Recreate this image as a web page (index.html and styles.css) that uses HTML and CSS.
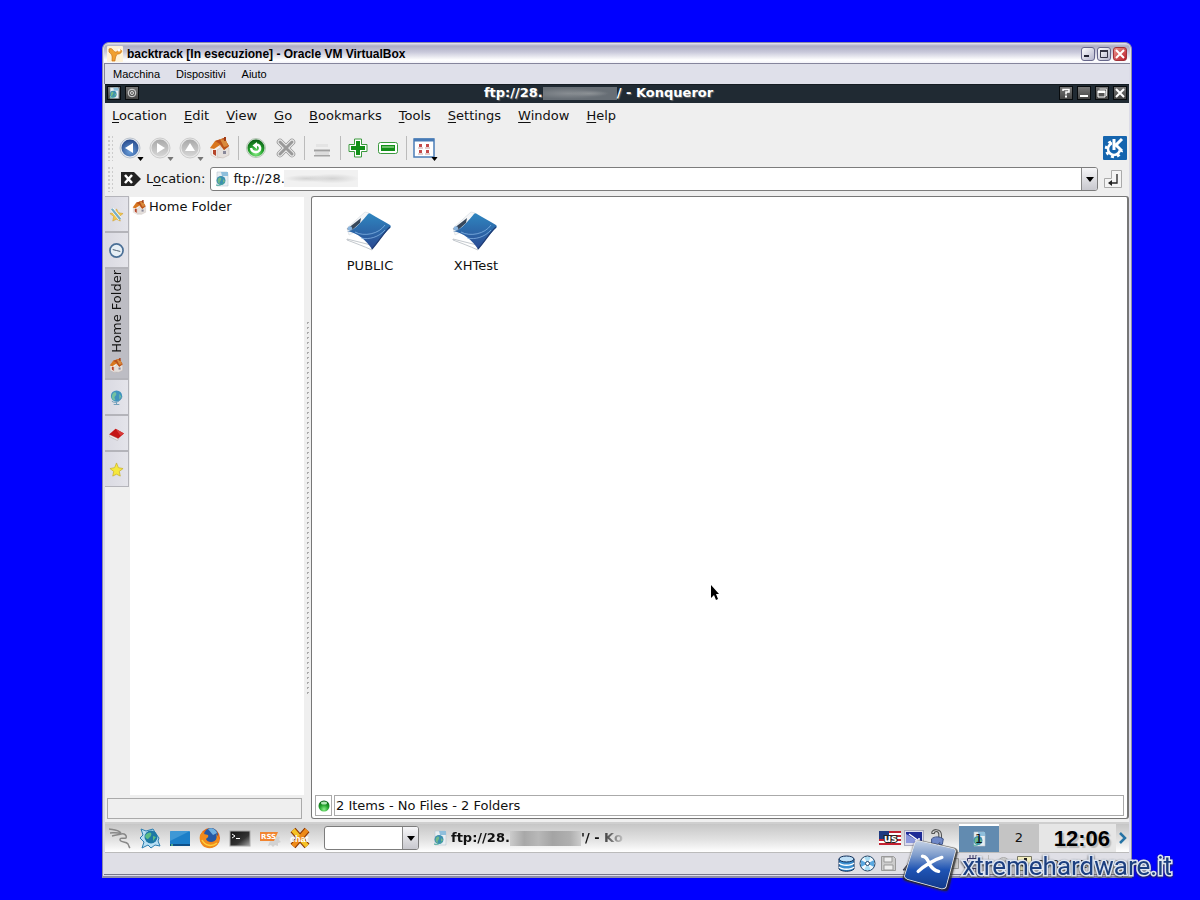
FILE: index.html
```html
<!DOCTYPE html>
<html lang="it">
<head>
<meta charset="utf-8">
<title>backtrack [In esecuzione] - Oracle VM VirtualBox</title>
<link rel="stylesheet" href="styles.css">
</head>
<body>
<svg class="defs" aria-hidden="true">
  <defs>
    <linearGradient id="gBlue" x1="0" y1="0" x2="0" y2="1"><stop offset="0" stop-color="#2f86c0"/><stop offset="1" stop-color="#2a4a92"/></linearGradient>
    <radialGradient id="gBack" cx=".5" cy=".7" r=".7"><stop offset="0" stop-color="#6ba0dc"/><stop offset="1" stop-color="#274a8c"/></radialGradient>
    <linearGradient id="gGray" x1="0" y1="0" x2="0" y2="1"><stop offset="0" stop-color="#a9a9a9"/><stop offset="1" stop-color="#d6d6d6"/></linearGradient>
    <radialGradient id="gGreen" cx=".5" cy=".8" r=".8"><stop offset="0" stop-color="#8df08a"/><stop offset=".5" stop-color="#23a32b"/><stop offset="1" stop-color="#0a5a14"/></radialGradient>
    <linearGradient id="gLogo" x1="0" y1="0" x2="0" y2="1"><stop offset="0" stop-color="#c3d0e4"/><stop offset=".3" stop-color="#7d9bcb"/><stop offset=".6" stop-color="#1f54b4"/><stop offset="1" stop-color="#123a8c"/></linearGradient>
    <linearGradient id="gDark" x1="0" y1="0" x2="1" y2="1"><stop offset="0" stop-color="#111"/><stop offset=".6" stop-color="#333"/><stop offset="1" stop-color="#aaa"/></linearGradient>
  </defs>
  <symbol id="house" viewBox="0 0 22 22">
    <path d="M2 11l5-4 7 4v9l-6 1-6-3z" fill="#f6f2ee" stroke="#c9bdb5" stroke-width=".6"/>
    <path d="M8 13l6-4 6 2v7l-6 3-6-1z" fill="#e4dfdc" stroke="#c0b6b0" stroke-width=".5"/>
    <path d="M1 11l5-7 9-3 5 8-5 4-4-5-6 4z" fill="#d9771f"/>
    <path d="M6 4l9-3 5 8-5 4-4-6z" fill="#b9501a"/>
    <path d="M11 2l6 1 2 6-4 1z" fill="#d88a3d"/>
    <path d="M4 13h3v6l-3-2z" fill="#b5452a"/><path d="M14 14h3v3h-3z" fill="#889"/>
    <path d="M15 0h2v4h-2z" fill="#a03a16"/>
  </symbol>
  <symbol id="page" viewBox="0 0 14 16">
    <path d="M2 1h10l1 2v12H2z" fill="#e8eef2" stroke="#b8c8d2" stroke-width=".6"/>
    <path d="M6 1h7v4H7z" fill="#8fbfdc"/>
    <circle cx="6" cy="9.500" r="4.500" fill="#3b8fb0"/>
    <path d="M3 8c2-3 4-1 3 1s-2 2-1 4c-2 0-3-3-2-5zM8 8l2 2-2 3z" fill="#72b98a"/>
    <path d="M1 14c3 1 6 0 8-3" fill="none" stroke="#4a9" stroke-width="1"/>
  </symbol>
  <symbol id="folder" viewBox="0 0 48 42">
    <path d="M3 18L21 2l4 1-8 16-12 6z" fill="#f4f6f8" stroke="#d5dadf" stroke-width=".6"/>
    <path d="M3 29l24 6 1 5C19 36 11 33 3 30z" fill="#fff" stroke="#b4bac0" stroke-width=".8"/>
    <path d="M3 19l14-11-1 5-9 8z" fill="#38485b"/><circle cx="6" cy="18.500" r="2.200" fill="#8ab4de"/>
    <path d="M3 21c2 0 4 0 5-1 6-4 11-10 16-16 1-1 2-1 3 0 6 4 13 7 19 11 1 1 1 2 0 3-6 5-10 12-18 21-6-9-14-16-25-18z" fill="url(#gBlue)"/>
    <path d="M11 22c9 5 24 2 30-7M17 28c8 2 18-1 24-8" fill="none" stroke="#8dbcea" stroke-width="1" opacity=".7"/>
    <path d="M28 39c9-10 12-17 18-22" fill="none" stroke="#1f3c74" stroke-width="1.200"/>
  </symbol>
  <symbol id="down" viewBox="0 0 8 5"><path d="M0 0h8L4 5z" fill="currentColor"/></symbol>
</svg>

<main class="vm">
  <header class="vm-title">
    <svg class="vm-logo" viewBox="0 0 16 16"><rect width="16" height="16" rx="1" fill="#fff3d8"/><path d="M2 3c3-2 4 2 6 3s4-4 6-2-1 4-3 4-3 5-3 7H5c0-4 1-6-3-9z" fill="#f0a030" stroke="#c86f14" stroke-width=".7"/><circle cx="12" cy="4" r="1.500" fill="#fff"/></svg>
    <h1>backtrack [In esecuzione] - Oracle VM VirtualBox</h1>
    <button class="xp" aria-label="Riduci"><svg viewBox="0 0 12 12"><path d="M2 7h5v2H2z" fill="#223"/></svg></button>
    <button class="xp" aria-label="Ingrandisci"><svg viewBox="0 0 12 12"><path d="M2.500 3h7v6.500h-7z" fill="none" stroke="#334"/><path d="M2 2h8v2H2z" fill="#334"/></svg></button>
    <button class="xp xp-close" aria-label="Chiudi"><svg viewBox="0 0 12 12"><path d="M2 2l8 8M10 2l-8 8" stroke="#fff" stroke-width="2"/></svg></button>
  </header>
  <nav class="vm-menu"><button>Macchina</button><button>Dispositivi</button><button>Aiuto</button></nav>

  <header class="kq-title">
    <div class="kq-side">
      <button class="kb" aria-label="Window menu"><svg viewBox="0 0 14 16"><use href="#page"/></svg></button>
      <button class="kb" aria-label="Sticky"><svg viewBox="0 0 12 12"><circle cx="6" cy="6" r="3.800" fill="none" stroke="#ddd"/><circle cx="6" cy="6" r="1.500" fill="none" stroke="#ddd"/></svg></button>
    </div>
    <h2><span>ftp://28.</span><i class="smudge smudge-dark"></i><span>/ - Konqueror</span></h2>
    <div class="kq-side kq-right">
      <button class="kb" aria-label="Help"><svg viewBox="0 0 12 12"><path d="M3 4V2.500h6V5H6v2.500" fill="none" stroke="#fff" stroke-width="1.500"/><path d="M5 8.500h2v2H5z" fill="#fff"/></svg></button>
      <button class="kb" aria-label="Minimize"><svg viewBox="0 0 12 12"><path d="M2 8h8v2H2z" fill="#fff"/></svg></button>
      <button class="kb" aria-label="Restore"><svg viewBox="0 0 12 12"><path d="M3.500 2h7v7" fill="none" stroke="#ddd"/><path d="M2 4h7v6H2z" fill="#555" stroke="#fff"/><path d="M2 4h7v2H2z" fill="#fff"/></svg></button>
      <button class="kb" aria-label="Close"><svg viewBox="0 0 12 12"><path d="M2 2l8 8M10 2l-8 8" stroke="#fff" stroke-width="2"/></svg></button>
    </div>
  </header>

  <nav class="kq-menu">
    <button><u>L</u>ocation</button><button><u>E</u>dit</button><button><u>V</u>iew</button><button><u>G</u>o</button><button><u>B</u>ookmarks</button><button><u>T</u>ools</button><button><u>S</u>ettings</button><button><u>W</u>indow</button><button><u>H</u>elp</button>
  </nav>

  <div class="toolbar">
    <i class="grip"></i>
    <button aria-label="Back"><svg viewBox="0 0 22 22"><circle cx="11" cy="11" r="10" fill="#e6eaf0" stroke="#bcc3cc"/><circle cx="11" cy="11" r="8.500" fill="url(#gBack)"/><path d="M6 11l8-5v10z" fill="#fff"/></svg><svg class="drop" viewBox="0 0 8 5"><use href="#down"/></svg></button>
    <button aria-label="Forward" class="off"><svg viewBox="0 0 22 22"><circle cx="11" cy="11" r="10" fill="#e8e8e8" stroke="#ccc"/><circle cx="11" cy="11" r="8.500" fill="url(#gGray)"/><path d="M16 11L8 6v10z" fill="#fff"/></svg><svg class="drop" viewBox="0 0 8 5"><use href="#down"/></svg></button>
    <button aria-label="Up" class="off"><svg viewBox="0 0 22 22"><circle cx="11" cy="11" r="10" fill="#e8e8e8" stroke="#ccc"/><circle cx="11" cy="11" r="8.500" fill="url(#gGray)"/><path d="M11 6l5 8H6z" fill="#fff"/></svg><svg class="drop" viewBox="0 0 8 5"><use href="#down"/></svg></button>
    <button aria-label="Home"><svg viewBox="0 0 22 22"><use href="#house"/></svg></button>
    <i class="sep"></i>
    <button aria-label="Reload"><svg viewBox="0 0 22 22"><circle cx="11" cy="11" r="9.500" fill="#d9e8d9" stroke="#b5c5b5"/><circle cx="11" cy="11" r="8.500" fill="url(#gGreen)"/><path d="M6 11c1 6 10 5 9-.500C14.500 8 12 7 10 8.500" fill="none" stroke="#fff" stroke-width="2.500"/><path d="M12 5v7L7.500 8.500z" fill="#fff"/></svg></button>
    <button aria-label="Stop"><svg viewBox="0 0 22 22"><path d="M5 5l12 12M17 5L5 17" stroke="#999" stroke-width="6.500" stroke-linecap="round"/><path d="M5 5l12 12M17 5L5 17" stroke="#eee" stroke-width="5" stroke-linecap="round"/><path d="M5 5l12 12M17 5L5 17" stroke="#999" stroke-width="3" stroke-linecap="round"/></svg></button>
    <i class="sep"></i>
    <button aria-label="Print"><svg viewBox="0 0 22 22"><path d="M5 7h12v3H5z" fill="#e4e4e4"/><path d="M3 12.500h16v2H3z" fill="#a0a0a0"/><path d="M4 15h14v3H4z" fill="#ddd"/><path d="M3 18h16v1.500H3z" fill="#a5a5a5"/></svg></button>
    <i class="sep"></i>
    <button aria-label="Increase"><svg viewBox="0 0 22 22"><path d="M7.500 2h7v5.500H20v7h-5.500V20h-7v-5.500H2v-7h5.500z" fill="#fff" stroke="#3a9a3d" stroke-linejoin="round"/><path d="M9 4h4v5h5v4h-5v5H9v-5H4V9h5z" fill="#129018"/></svg></button>
    <button aria-label="Decrease"><svg viewBox="0 0 22 22"><rect x="1.500" y="5.500" width="19" height="11" rx="2" fill="#fff" stroke="#3a9a3d"/><path d="M4 8h14v6H4z" fill="#129018"/><path d="M5 9h12v2H5z" fill="#6fc06c"/></svg></button>
    <i class="sep"></i>
    <button aria-label="Icon view"><svg viewBox="0 0 22 22"><path d="M1 2h20v18H1z" fill="#fff" stroke="#4b7db8" stroke-width="1.500"/><path d="M1 1.500h20v3H1z" fill="#477ab5"/><path d="M6 7h3v3H6zM13 7h3v3h-3zM6 13h3v3H6zM13 13h3v3h-3z" fill="#c44a4a"/><path d="M5 11h5M12 11h5M5 17h5M12 17h5" stroke="#c8a0a0"/></svg><svg class="drop" viewBox="0 0 8 5"><use href="#down"/></svg></button>
    <svg class="kde" viewBox="0 0 24 24"><rect width="24" height="24" rx="1" fill="#1565ae"/><circle cx="11" cy="13" r="6" fill="none" stroke="#fff" stroke-width="2.500"/><circle cx="11" cy="13" r="8" fill="none" stroke="#fff" stroke-width="2.500" stroke-dasharray="3 3.280"/><path d="M9 1h14v14h-5l-4-2H9z" fill="#1565ae"/><path d="M11 3v11M19 3l-6 6 6 6" fill="none" stroke="#fff" stroke-width="3"/></svg>
  </div>

  <div class="location">
    <i class="grip"></i>
    <button class="clear" aria-label="Clear location"><svg viewBox="0 0 20 16"><path d="M0 1h13l7 7-7 7H0z" fill="#222"/><path d="M4 4l7 8M11 4l-7 8" stroke="#fff" stroke-width="2.500"/></svg></button>
    <label for="url">L<u>o</u>cation:</label>
    <div class="combo url">
      <svg class="pageicon" viewBox="0 0 14 16"><use href="#page"/></svg>
      <input id="url" type="text" value="ftp://28.">
      <i class="smudge smudge-light"></i>
      <button aria-label="History"><svg viewBox="0 0 8 5"><use href="#down"/></svg></button>
    </div>
    <button class="go" aria-label="Go"><svg viewBox="0 0 20 20"><path d="M8.500 1.500h10v17h-17v-9h7z" fill="#f4f4f4" stroke="#aaa"/><path d="M14 5v9H6" fill="none" stroke="#222" stroke-width="1.300"/><path d="M5 14l4-3v6z" fill="#222"/></svg></button>
  </div>

  <div class="content">
    <aside class="side">
      <div class="side-main">
        <nav class="tabs">
          <button aria-label="Settings"><svg viewBox="0 0 16 16"><path d="M8 2l2 4 5 1-4 3 1 5-4-2-4 2 1-5-4-3 5-1z" fill="#f2c84b" stroke="#d0a030" stroke-width=".6"/><path d="M3 2l9 11" stroke="#fff" stroke-width="4"/><path d="M3 2l9 11" stroke="#77adc5" stroke-width="2.500"/></svg></button>
          <button aria-label="History"><svg viewBox="0 0 16 16"><circle cx="8" cy="8" r="7" fill="#e7eff5" stroke="#4a6f96" stroke-width="1.800"/><path d="M4 7l4 1 4 1" fill="none" stroke="#456"/></svg></button>
          <button class="on"><span>Home Folder</span><svg viewBox="0 0 22 22"><use href="#house"/></svg></button>
          <button aria-label="Network"><svg viewBox="0 0 16 16"><circle cx="8" cy="6.500" r="6" fill="#3f93bd"/><path d="M4 4c3-4 5 0 3 2s-1 2 0 5C3 11 2 7 4 4zM11 4l2 3-2 3z" fill="#73c2a0"/><path d="M3 12c4 3 9 0 11-5M8 13v2M5 15.500h6" fill="none" stroke="#6a9ab5"/></svg></button>
          <button aria-label="Root folder"><svg viewBox="0 0 16 16"><path d="M0 9l7-6 9 5-7 6z" fill="#c41414"/><path d="M0 9l9 4 1 1-1 1.500L0 11z" fill="#f4e8e8" stroke="#999" stroke-width=".4"/><path d="M7 3l9 5-4 2z" fill="#d83a3a"/></svg></button>
          <button aria-label="Bookmarks"><svg viewBox="0 0 16 16"><path d="M8 1l2 5 5 1-4 3 1 5-4-2-4 2 1-5-4-3 5-1z" fill="#f5e83c" stroke="#c9b12c" stroke-width=".8"/></svg></button>
        </nav>
        <div class="tree"><a href="#home"><svg viewBox="0 0 22 22"><use href="#house"/></svg>Home Folder</a></div>
      </div>
      <div class="side-foot"></div>
    </aside>
    <div class="splitter"></div>
    <section class="view">
      <div class="files">
        <a href="#public"><svg viewBox="0 0 48 42"><use href="#folder"/></svg>PUBLIC</a>
        <a href="#xhtest"><svg viewBox="0 0 48 42"><use href="#folder"/></svg>XHTest</a>
      </div>
      <footer class="status">
        <div class="led"><svg viewBox="0 0 12 12"><circle cx="6" cy="6" r="5.500" fill="url(#gGreen)"/><ellipse cx="6" cy="3" rx="3" ry="1.500" fill="#d9ffd9" opacity=".8"/></svg></div>
        <div class="msg">2 Items - No Files - 2 Folders</div>
      </footer>
    </section>
  </div>

  <footer class="panel">
    <div class="launch">
      <button aria-label="K Menu"><svg viewBox="0 0 22 22"><path d="M0 2c4 1 8 0 12 4M1 6c4 0 7-1 11 1M3 9c4-1 6-1 9-2 4-1 6 2 5 4-3 1-6-1-6 2 1 3 6 1 8 4 1 2 1 3 2 4" fill="none" stroke="#888" stroke-width="1.500"/></svg></button>
      <button aria-label="Konqueror"><svg viewBox="0 0 22 22"><path d="M2 2l5 2 7-2 3 5 3 4-1 3 2 5-5-1-4 3-3-3-6 3 2-6-4-4 3-3z" fill="#b8dff4" stroke="#2c7eb0"/><circle cx="12" cy="10" r="6.500" fill="#1d78a5"/><path d="M9 6c4-2 4 2 2 4s-2 3-4 1 0-4 2-5zM14 9l3 1-3 4z" fill="#5bbd85"/></svg></button>
      <button aria-label="Desktop"><svg viewBox="0 0 22 22"><rect x="1" y="4" width="20" height="15" rx="1" fill="#1c7fc8"/><path d="M1 4h20L1 14z" fill="#56a9de" opacity=".6"/><path d="M1 17h20v2H1z" fill="#0d4f88"/><path d="M2 18h2" stroke="#8f8" stroke-width="1"/></svg></button>
      <button aria-label="Firefox"><svg viewBox="0 0 22 22"><circle cx="11" cy="11" r="10" fill="#e66a13"/><circle cx="12" cy="8" r="7" fill="#2459a5"/><path d="M9 2c4-2 8 1 9 4l-4 2z" fill="#6fb0e0"/><path d="M1 8l3-4 1 3 4 1c1 2-1 3-2 4 1 4 6 4 9 2 2-2 2-5 1-7 4 3 4 8 1 11-4 4-10 4-14 1-3-3-4-7-3-11z" fill="#f08a1c"/><path d="M3 13c3 6 10 7 15 3" fill="none" stroke="#ffd03c" stroke-width="1.500"/></svg></button>
      <button aria-label="Terminal"><svg viewBox="0 0 22 22"><rect x="1" y="4" width="20" height="15" fill="url(#gDark)" stroke="#aaa"/><path d="M3 7l3 2-3 2M7 11.500h4" fill="none" stroke="#fff"/></svg></button>
      <button aria-label="RSS"><svg viewBox="0 0 22 22"><path d="M12 12l2-2 2 2 2-3 3 1-1 3 2 2-3 1v3l-3-1-2 2-2-2-3 1 1-3z" fill="#d2d2d2"/><path d="M1 5h18l-4 9H1z" fill="#f1842f"/><text x="2" y="12" class="rss">RSS</text></svg></button>
      <button aria-label="xchat"><svg viewBox="0 0 22 22"><path d="M4 3l14 16M18 3L4 19" stroke="#8c3600" stroke-width="6.500"/><path d="M4 3l14 16" stroke="#f5c225" stroke-width="4.500"/><path d="M18 3L4 19" stroke="#ee8a18" stroke-width="4.500"/><text x="1" y="15" class="xc">chat</text></svg></button>
    </div>
    <div class="combo run"><input type="text" aria-label="Run command"><button aria-label="Show commands"><svg viewBox="0 0 8 5"><use href="#down"/></svg></button></div>
    <button class="task"><svg viewBox="0 0 14 16"><use href="#page"/></svg><span>ftp://28.</span><i class="smudge smudge-task"></i><span>'/ - Ko</span></button>
    <div class="tray">
      <button class="flag" aria-label="US keyboard"><svg viewBox="0 0 22 14"><path d="M0 0h22v14H0z" fill="#fff"/><path d="M0 1h22M0 5h22M0 9h22M0 13h22" stroke="#c22030" stroke-width="2"/><path d="M0 0h10v8H0z" fill="#1f3a80"/><text x="5" y="10.500" class="us">us</text></svg></button>
      <button aria-label="Display"><svg viewBox="0 0 20 16"><rect x=".5" y=".5" width="19" height="15" fill="#dcdcec" stroke="#aab"/><path d="M2 2h16v11H2z" fill="#1f2b96"/><path d="M2 13V4l16 9z" fill="#8a96dc"/><path d="M5 4l10 7M11 11h4V8" fill="none" stroke="#fff" stroke-width="1.500"/></svg></button>
      <button aria-label="Lock"><svg viewBox="0 0 16 20"><path d="M2 5c0-6 11-6 11 2v4M2 5h3c0-3 5-3 5 1v4" fill="none" stroke="#555" stroke-width="1.200"/><path d="M2 11c3-3 9-3 13 0l-1 6-3 1v-3l-3 3-3-1-1 3-2-4z" fill="#6f88c8" stroke="#334a80"/></svg></button>
    </div>
    <div class="pager"><button class="on"><svg viewBox="0 0 14 16"><use href="#page"/></svg><span>1</span></button><button>2</button></div>
    <time class="clock">12:06</time>
    <button class="hide" aria-label="Hide panel"><svg viewBox="0 0 8 12"><path d="M1 1l5 5-5 5" fill="none" stroke="#2673a5" stroke-width="2.500"/></svg></button>
  </footer>

  <footer class="vm-status">
    <svg viewBox="0 0 17 17"><path d="M1 4v10c3 3 12 3 15 0V4z" fill="#3c8fd0" stroke="#0c2c58"/><path d="M1 8c3 3 12 3 15 0M1 12c3 3 12 3 15 0" fill="none" stroke="#fff" stroke-width="1.500"/><ellipse cx="8.500" cy="4" rx="7.500" ry="3" fill="#bfe0f8" stroke="#0c2c58"/></svg>
    <svg viewBox="0 0 17 17"><circle cx="8.500" cy="8.500" r="7.500" fill="#f2f8fc" stroke="#246"/><path d="M8.500 8.500L5 2h7zM8.500 8.500L5 15h7z" fill="#a8dcf4"/><path d="M8.500 8.500L2 5v7zM8.500 8.500L15 5v7z" fill="#5aa8e0"/><circle cx="8.500" cy="8.500" r="2" fill="#fff" stroke="#246"/></svg>
    <svg viewBox="0 0 17 17"><path d="M1.500 1.500h12l2 2v12h-14z" fill="#ccc" stroke="#999"/><path d="M4 2h8v5H4zM4 10h9v5H4z" fill="#eee" stroke="#999"/></svg>
    <svg viewBox="0 0 17 17"><path d="M2 15L13 2l2 2L5 15z" fill="#667" stroke="#334"/></svg>
    <svg viewBox="0 0 17 17"><path d="M2 5h13v10H2z" fill="#bbc" stroke="#778"/></svg>
    <svg viewBox="0 0 17 17"><path d="M1.500 3.500h14v10h-14z" fill="#ccc" stroke="#999"/></svg>
    <svg viewBox="0 0 17 17"><path d="M3.500 3.500h10v10h-10z" fill="#dde" stroke="#336"/><path d="M6 0v3M9 0v3M12 0v3M6 14v3M9 14v3M12 14v3M0 6h3M0 9h3M0 12h3M14 6h3M14 9h3M14 12h3" stroke="#336"/></svg>
    <i class="sep"></i>
    <svg viewBox="0 0 17 17"><circle cx="8.500" cy="8.500" r="6" fill="#ccc" stroke="#aaa"/><path d="M5 9l7-4" stroke="#999"/></svg>
    <svg viewBox="0 0 17 17"><path d="M1.500 1.500h14v14h-14z" fill="#f4efc0" stroke="#776"/><path d="M8 3v7H5l4 4 4-4h-2V3z" fill="#222"/></svg>
    <span>CTRL (DESTRA)</span>
  </footer>

  <svg class="cursor" viewBox="0 0 10 16"><path d="M0 0v13l3-3 2 5 2-1-2-5h3z" fill="#000"/></svg>

  <div class="brand">
    <svg viewBox="0 0 54 52"><path d="M18 2l32 7c2 1 3 2 3 4l-8 33c-1 3-3 4-5 3L5 40c-3-1-4-2-3-5L13 5c1-2 2-3 5-3z" fill="#222" opacity=".5"/><path d="M17 3l31 7c2 0 3 2 2 4l-8 30c0 2-2 3-4 3L6 38c-2-1-3-2-2-4L13 5c1-2 2-2 4-2z" fill="url(#gLogo)" stroke="#eee" stroke-width="1.500"/><path d="M20 17c4 0 5 4 7 8 2 3 4 5 8 6M38 18c-7 2-17 8-22 13" fill="none" stroke="#fff" stroke-width="3.200" stroke-linecap="round"/></svg>
    <span>xtremehardware.it</span>
  </div>
</main>
</body>
</html>
```
FILE: styles.css
```css
* { box-sizing: border-box; }
body {
  margin: 0;
  min-height: 100vh;
  display: flex;
  padding: 42px 68px 22px 102px;
  background: #0000ff;
  font: 13px/16px "DejaVu Sans", sans-serif;
  color: #111;
}
button {
  font: inherit;
  color: inherit;
  background: none;
  border: 0;
  padding: 0;
}
a { color: inherit; text-decoration: none; }
h1, h2 { margin: 0; }
svg { display: block; flex: none; }
.defs { position: absolute; width: 0; height: 0; }

.vm {
  position: relative;
  flex: 1;
  display: flex;
  flex-direction: column;
  min-width: 0;
  border: solid #8d8da8;
  border-width: 1px 1px 2px;
  border-radius: 7px 7px 0 0;
  padding: 0 1px 1px;
  background: #dcdce8;
}

/* host window */
.vm-title {
  height: 21px;
  display: flex;
  align-items: center;
  gap: 2px;
  padding: 2px 3px 0 3px;
  border-radius: 6px 6px 0 0;
  background: linear-gradient(#e8e8f4, #adadc4 15%, #c8c8da 45%, #fff 85%, #f4f4fa);
  border-bottom: 1px solid #85859c;
}
.vm-title h1 {
  flex: 1;
  font: bold 12px/16px "Liberation Sans", sans-serif;
  color: #000;
  white-space: nowrap;
}
.vm-logo { width: 16px; height: 16px; margin-right: 2px; }
.xp {
  width: 14px;
  height: 14px;
  border: 1px solid #66668a;
  border-radius: 3px;
  background: linear-gradient(135deg, #fff, #b4b4cc);
}
.xp-close { border-color: #a03038; background: linear-gradient(135deg, #f09890, #b81c28); }
.vm-menu {
  height: 20px;
  display: flex;
  align-items: center;
  gap: 16px;
  margin-right: 1px;
  padding-left: 8px;
  background: #dfe0ea;
  border-left: 1px solid #85859c;
  font: 11px/16px "Liberation Sans", sans-serif;
  color: #000;
}

/* guest window title */
.kq-title {
  height: 19px;
  display: flex;
  align-items: center;
  padding: 0 3px 2px;
  margin: 0 1px;
  background: #202a33;
  border-top: 1px solid #151c22;
}
.kq-title h2 {
  display: flex;
  align-items: center;
  padding-right: 37px;
  font-size: 13px;
  line-height: 16px;
  color: #fff;
  text-shadow: 1px 1px 1px #666;
}
.kq-side { flex: 1; display: flex; gap: 6px; }
.kq-right { justify-content: flex-end; }
.kb {
  width: 12px;
  height: 12px;
  background: linear-gradient(#777, #444);
  outline: 1px solid #080b0e;
}
.kb svg { width: 12px; height: 12px; }
.smudge { display: block; flex: none; }
.smudge-dark {
  width: 74px;
  height: 13px;
  background: radial-gradient(ellipse at 62% 50%, #8c9195, transparent 30%), radial-gradient(ellipse at 35% 50%, #888d92, #676e75 60%);
}
.smudge-light {
  position: absolute;
  left: 73px;
  top: 2px;
  width: 74px;
  height: 17px;
  background: radial-gradient(ellipse at 30% 50%, #d2d2d2, transparent 30%), radial-gradient(ellipse at 65% 50%, #d2d2d2, transparent 40%), #f1f1f1;
}
.smudge-task {
  width: 71px;
  height: 15px;
  background: linear-gradient(90deg, #ccc, #a8a8a8 20%, #b8b8b8 40%, #a4a4a4 60%, #b0b0b0 85%, #ccc);
}

/* guest menus and toolbars */
.kq-menu, .toolbar, .location, .content { margin: 0 1px; background: #efefef; }
.kq-menu {
  height: 28px;
  display: flex;
  align-items: center;
  gap: 17px;
  padding: 0 0 2px 7px;
}
u { text-underline-offset: 2px; }
.toolbar { height: 33px; display: flex; align-items: center; padding: 0 2px; }
.toolbar button {
  position: relative;
  width: 30px;
  height: 32px;
  display: grid;
  place-items: center;
}
.toolbar button svg { width: 22px; height: 22px; }
.toolbar button .drop { position: absolute; right: 1px; bottom: 3px; width: 7px; height: 4px; color: #000; }
.toolbar .off .drop { color: #777; }
.grip {
  width: 6px;
  height: 26px;
  margin-right: 2px;
  background: radial-gradient(circle, #ccc 1px, transparent 1px) 0 0 / 4px 4px;
}
.sep { width: 1px; height: 24px; margin: 0 2px 0 3px; background: #bbb; }
.kde { width: 24px; height: 24px; margin-left: auto; }
.location { height: 32px; display: flex; align-items: center; padding: 0 6px 2px 2px; }
.clear { width: 20px; margin: 0 5px 0 6px; }
.combo {
  position: relative;
  display: flex;
  height: 24px;
  align-items: stretch;
  border: 1px solid #7c7c7c;
  border-radius: 3px;
  background: #fff;
}
.combo input {
  flex: 1;
  min-width: 0;
  border: 0;
  padding: 0;
  background: none;
  font: inherit;
  color: inherit;
}
.combo button {
  width: 16px;
  display: grid;
  place-items: center;
  border-left: 1px solid #888;
  border-radius: 0 2px 2px 0;
  background: linear-gradient(#f6f6f8, #c8c8ce);
  color: #000;
}
.combo button svg { width: 8px; height: 5px; }
.url { flex: 1; margin: 0 5px; }
.pageicon { width: 14px; height: 16px; margin: 3px 4px 0; }
.go svg { width: 20px; height: 20px; }

/* main content */
.content { flex: 1; display: flex; min-height: 0; padding-bottom: 3px; }
.side { width: 199px; display: flex; flex-direction: column; }
.side-main { flex: 1; display: flex; }
.tabs { width: 25px; }
.tabs button {
  width: 24px;
  height: 36px;
  display: grid;
  place-items: center;
  border: 1px solid #b4b4ba;
  border-width: 1px 1px 1px 0;
  background: linear-gradient(90deg, #dadae2, #e4e4ea);
}
.tabs svg { width: 15px; height: 15px; }
.tabs .on {
  height: 111px;
  display: flex;
  flex-direction: column;
  align-items: center;
  justify-content: flex-end;
  gap: 5px;
  padding-bottom: 5px;
  background: #bdbdc4;
}
.tabs .on span { writing-mode: vertical-rl; transform: rotate(180deg); white-space: nowrap; }
.tree { flex: 1; margin-top: 1px; padding: 2px; background: #fff; }
.tree a { display: flex; align-items: center; gap: 2px; }
.tree svg { width: 15px; height: 15px; }
.side-foot { height: 21px; margin: 3px 2px 0; border: 1px solid #aaa; }
.splitter {
  width: 7px;
  background: radial-gradient(circle, #aaa 1px, transparent 1px) 1px 0 / 5px 5px repeat-y;
  margin: 124px 0;
}
.view {
  flex: 1;
  display: flex;
  flex-direction: column;
  min-width: 0;
  border: 1px solid #777;
  border-right-width: 2px;
  border-radius: 3px;
  background: #fff;
}
.files { flex: 1; display: flex; padding: 13px 5px; }
.files a { width: 106px; display: flex; flex-direction: column; align-items: center; gap: 6px; }
.files svg { width: 48px; height: 42px; margin-right: 4px; }
.status { display: flex; gap: 2px; padding: 0 3px 2px; }
.led, .msg { height: 21px; border: 1px solid #aaa; }
.led { width: 17px; display: grid; place-items: center; }
.led svg { width: 12px; height: 12px; }
.msg { flex: 1; padding: 2px 1px; line-height: 16px; }

/* guest panel */
.panel {
  height: 31px;
  display: flex;
  align-items: center;
  margin: 0 1px;
  border-top: 2px solid #cfcfcf;
  border-bottom: 1px solid #bbb;
  background: linear-gradient(#c6c6c6, #e4e4e4 60%, #fff);
}
.launch { display: flex; }
.launch button { width: 30px; display: grid; place-items: center; }
.launch svg { width: 22px; height: 22px; }
.rss { font: bold 7px "DejaVu Sans", sans-serif; fill: #fff; }
.xc { font: bold 9px "Liberation Sans", sans-serif; fill: #fff; }
.us { font: bold 10px "DejaVu Sans", sans-serif; fill: #fff; stroke: #222; stroke-width: 2px; paint-order: stroke; }
.run { width: 95px; margin-left: 9px; }
.task {
  width: 194px;
  margin-left: 14px;
  display: flex;
  align-items: center;
  overflow: hidden;
  font-weight: bold;
  white-space: nowrap;
  -webkit-mask-image: linear-gradient(90deg, #000 85%, transparent);
  mask-image: linear-gradient(90deg, #000 85%, transparent);
}
.task svg { width: 14px; height: 16px; margin-right: 4px; }
.tray { margin-left: auto; display: flex; align-items: center; gap: 3px; padding-right: 12px; }
.tray svg { width: 20px; height: 18px; }
.tray .flag svg { width: 22px; height: 14px; }
.pager { display: flex; align-self: stretch; }
.pager button { position: relative; width: 40px; display: grid; place-items: center; background: #c4c4c4; }
.pager .on { background: #628bb0; border-top: 2px solid #fff; }
.pager svg { position: absolute; left: 13px; top: 5px; width: 14px; height: 16px; }
.pager span { position: relative; }
.clock {
  align-self: stretch;
  width: 77px;
  padding-right: 6px;
  text-align: right;
  background: #e6e6e6;
  font: bold 22px/29px "Liberation Sans", sans-serif;
  color: #000;
  text-shadow: 2px 2px 1px #bbb;
}
.hide { width: 13px; display: grid; place-items: center; }
.hide svg { width: 8px; height: 12px; }

/* host status bar */
.vm-status {
  height: 22px;
  display: flex;
  align-items: center;
  justify-content: flex-end;
  gap: 4px;
  padding-right: 10px;
  background: #dfdfe6;
  border-bottom: 1px solid #77778c;
  font: 11px/16px "Liberation Sans", sans-serif;
}
.vm-status svg { width: 17px; height: 17px; }
.vm-status .sep { height: 18px; }

.cursor { position: absolute; left: 608px; top: 542px; width: 10px; height: 16px; }
.brand {
  position: absolute;
  right: -41px;
  bottom: -18px;
  display: flex;
  align-items: center;
  gap: 3px;
  font: 26px/30px "Roboto", sans-serif;
  color: #1c3f80;
  -webkit-text-stroke: 3px #dfe6f2;
  paint-order: stroke fill;
  filter: drop-shadow(0 1px 1px #333);
}
.brand svg { width: 58px; height: 56px; }
```
